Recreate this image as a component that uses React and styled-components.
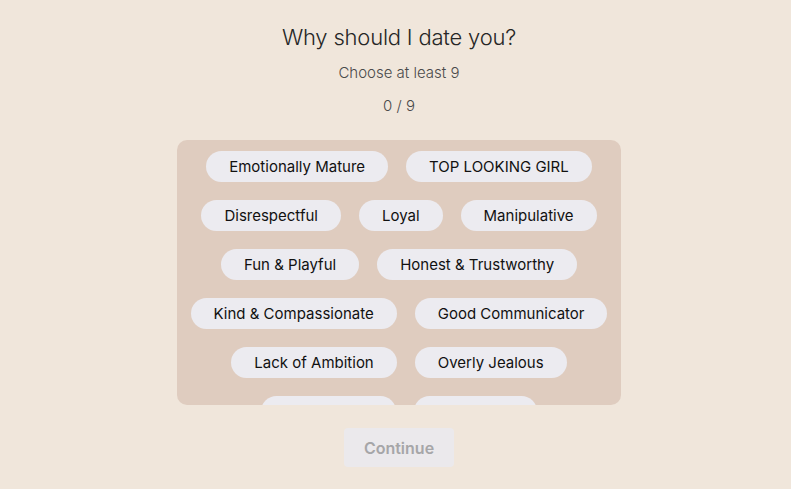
import React from "react";
import styled, { createGlobalStyle } from "styled-components";

const traits = [
  "Emotionally Mature",
  "TOP LOOKING GIRL",
  "Disrespectful",
  "Loyal",
  "Manipulative",
  "Fun & Playful",
  "Honest & Trustworthy",
  "Kind & Compassionate",
  "Good Communicator",
  "Lack of Ambition",
  "Overly Jealous",
  "Independent",
  "Supportive",
  "Financially Stable",
  "Family Oriented",
];

const GlobalStyle = createGlobalStyle`
  html, body {
    margin: 0;
    background: #f0e6db;
  }
  body {
    font-family: Inter, "Noto Sans", sans-serif;
  }
`;

const Page = styled.div`
  min-height: 489px;
  display: flex;
  flex-direction: column;
  align-items: center;
  padding: 22px 0 0 7px;
  box-sizing: border-box;
`;

const Title = styled.h1`
  margin: 0;
  font-size: 22px;
  line-height: 30px;
  font-weight: 300;
  color: #262626;
  letter-spacing: -0.2px;
`;

const Sub = styled.p`
  margin: ${({ top }) => top}px 0 0;
  font-size: 15px;
  line-height: 20px;
  font-weight: 300;
  color: #4a4a4a;
`;

const Panel = styled.div`
  margin-top: 24px;
  width: 444px;
  height: 265px;
  box-sizing: border-box;
  padding: 11px 10px;
  background: #dfccbf;
  border-radius: 10px;
  overflow: hidden;
  display: flex;
  flex-wrap: wrap;
  justify-content: center;
  align-content: flex-start;
  gap: 18px 18px;
`;

const Chip = styled.button`
  height: 31px;
  padding: 0 23px;
  border: none;
  border-radius: 16px;
  background: #ecebf0;
  color: #111;
  font-family: Inter, "Noto Sans", sans-serif;
  font-size: 15px;
  cursor: pointer;
`;

const Continue = styled.button`
  margin-top: 23px;
  width: 110px;
  height: 39px;
  border: none;
  border-radius: 4px;
  background: #ebe9ec;
  color: #a6a6a8;
  font-family: Inter, "Noto Sans", sans-serif;
  font-size: 16px;
  font-weight: 600;
`;

export default function App() {
  return (
    <>
      <GlobalStyle />
      <Page>
        <Title>Why should I date you?</Title>
        <Sub top={11}>Choose at least 9</Sub>
        <Sub top={13}>0 / 9</Sub>
        <Panel>
          {traits.map((t) => (
            <Chip key={t}>{t}</Chip>
          ))}
        </Panel>
        <Continue disabled>Continue</Continue>
      </Page>
    </>
  );
}
